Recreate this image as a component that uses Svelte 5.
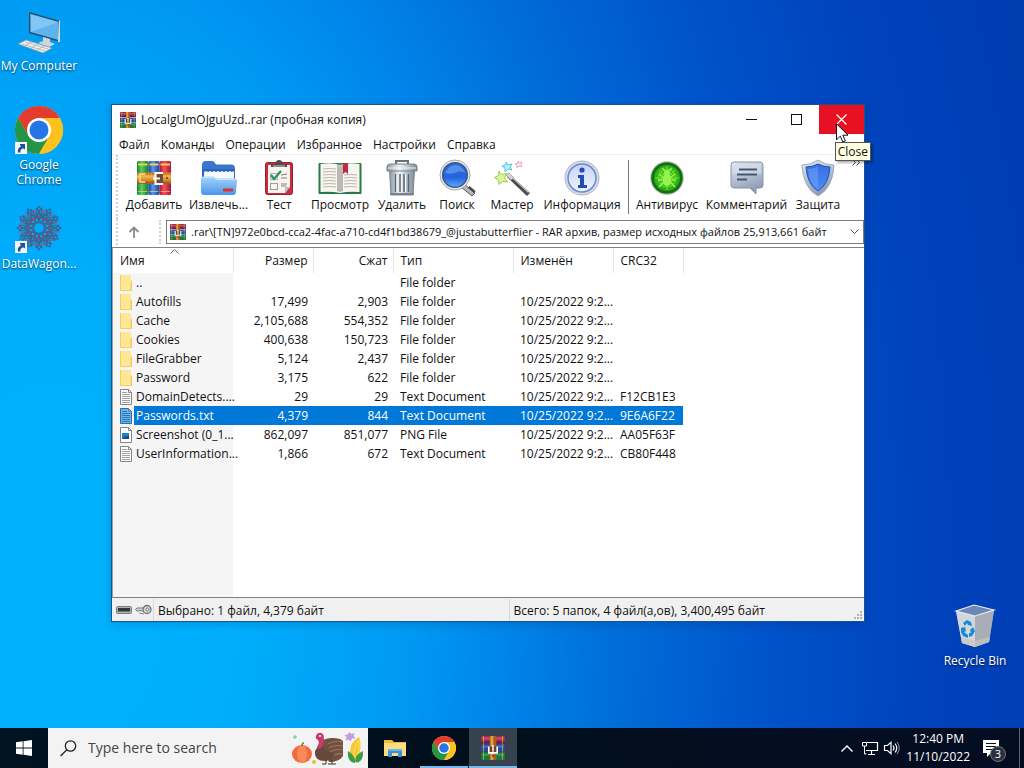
<script>
  const menu = ['Файл', 'Команды', 'Операции', 'Избранное', 'Настройки', 'Справка'];
  const tools = [
    ['add', 'Добавить'], ['extract', 'Извлечь...'], ['test', 'Тест'], ['view', 'Просмотр'],
    ['delete', 'Удалить'], ['find', 'Поиск'], ['wizard', 'Мастер'], ['info', 'Информация'],
    ['sep', ''], ['virus', 'Антивирус'], ['comment', 'Комментарий'], ['protect', 'Защита']
  ];
  const date = '10/25/2022 9:2...';
  const files = [
    { icon: 'folder', name: '..', size: '', packed: '', type: 'File folder', date: '', crc: '' },
    { icon: 'folder', name: 'Autofills', size: '17,499', packed: '2,903', type: 'File folder', date, crc: '' },
    { icon: 'folder', name: 'Cache', size: '2,105,688', packed: '554,352', type: 'File folder', date, crc: '' },
    { icon: 'folder', name: 'Cookies', size: '400,638', packed: '150,723', type: 'File folder', date, crc: '' },
    { icon: 'folder', name: 'FileGrabber', size: '5,124', packed: '2,437', type: 'File folder', date, crc: '' },
    { icon: 'folder', name: 'Password', size: '3,175', packed: '622', type: 'File folder', date, crc: '' },
    { icon: 'text', name: 'DomainDetects....', size: '29', packed: '29', type: 'Text Document', date, crc: 'F12CB1E3' },
    { icon: 'text', name: 'Passwords.txt', size: '4,379', packed: '844', type: 'Text Document', date, crc: '9E6A6F22' },
    { icon: 'image', name: 'Screenshot (0_1...', size: '862,097', packed: '851,077', type: 'PNG File', date, crc: 'AA05F63F' },
    { icon: 'text', name: 'UserInformation...', size: '1,866', packed: '672', type: 'Text Document', date, crc: 'CB80F448' }
  ];
  let selected = $state('Passwords.txt');
  const petals = [0, 30, 60, 90, 120, 150, 180, 210, 240, 270, 300, 330];
</script>

{#snippet rar(size)}
  <svg width={size} height={size} viewBox="0 0 16 16" aria-hidden="true">
    <rect x="0" y="0" width="16" height="5" rx="0.6" fill="#a02c50" />
    <rect x="0.6" y="1" width="14.8" height="1.3" fill="#c85070" />
    <rect x="0" y="3.6" width="16" height="1.4" fill="#651a44" />
    <rect x="0" y="5.4" width="16" height="5" rx="0.6" fill="#2448a4" />
    <rect x="0.6" y="6.4" width="14.8" height="1.3" fill="#4070c8" />
    <rect x="0" y="10.8" width="16" height="5.2" rx="0.6" fill="#167a3e" />
    <rect x="0.6" y="11.8" width="14.8" height="1.3" fill="#38a058" />
    <path d="M1.7 0v5M1.7 5.4v5M1.7 10.8v5M14.3 0v5M14.3 5.4v5M14.3 10.8v5" stroke="#d0a038" stroke-width="0.6" />
    <rect x="5.8" y="0" width="4.400" height="16" fill="#a85c22" />
    <rect x="6.4" y="0" width="1.8" height="16" fill="#e6a040" />
    <path d="M5.200 7v4.200h5.600V7" fill="#68402c" stroke="#fff" stroke-width="1.1" />
    <path d="M8 6v4.500" stroke="#fff" stroke-width="1" />
    <path d="M7.2 13.2h1.6" stroke="#5e2d10" stroke-width="0.8" />
  </svg>
{/snippet}

{#snippet chrome(size)}
  <svg width={size} height={size} viewBox="0 0 48 48" aria-hidden="true">
    <circle cx="24" cy="24" r="24" fill="#fcc31e" />
    <path d="M24 12H44.8A24 24 0 0 0 3.2 12L13.6 30Z" fill="#e33b2e" />
    <path d="M3.2 12A24 24 0 0 0 24 48L34.4 30L24 34L13.6 30Z" fill="#249447" />
    <path d="M44.8 12A24 24 0 0 1 24 48L34.4 30A12 12 0 0 0 24 12Z" fill="#fcc31e" />
    <circle cx="24" cy="24" r="12" fill="#fff" />
    <circle cx="24" cy="24" r="9.5" fill="#2675e8" />
  </svg>
{/snippet}

{#snippet shortcut()}
  <svg class="shortcut" width="12" height="12" viewBox="0 0 12 12" aria-hidden="true">
    <rect width="12" height="12" fill="#f3f5f8" />
    <path d="M3 10.5C2.4 7.5 3.4 5.6 6 4.6L4.6 2H10v5.4L8 6.2C6 7 5.2 8.3 5.4 10.5Z" fill="#1e5298" />
  </svg>
{/snippet}

{#snippet toolIcon(kind)}
  <svg width="36" height="36" viewBox="0 0 36 36" aria-hidden="true">
    {#if kind === 'add'}
      <rect x="1" y="1" width="11.500" height="34" rx="1.500" fill="url(#bookGreen)" />
      <rect x="12.500" y="1" width="11" height="34" rx="1.500" fill="url(#bookBlue)" />
      <rect x="23.500" y="1" width="11.500" height="34" rx="1.500" fill="url(#bookRed)" />
      <path d="M2 4.500h9.500M13.500 4.500h9M24.500 4.500h9.500" stroke="#f0d24c" stroke-width="2" />
      <path d="M2 31.500h9.500M13.500 31.500h9M24.500 31.500h9.500" stroke="#e8d070" stroke-width="1" opacity="0.700" />
      <path d="M1 12.500h34v11.500H1z" fill="url(#belt)" />
      <path d="M1 14h34M1 22.500h34" stroke="#7c4310" stroke-dasharray="2 1" stroke-width="0.600" />
      <path d="M9 14h-5v8h5" fill="none" stroke="#ffe596" stroke-width="1.300" />
      <path d="M19 14h8v9h-8z" fill="#6d4a3c" />
      <path d="M27 13h-7.500v11H27M17 18.500h7" fill="none" stroke="#fff8ec" stroke-width="2.200" />
      <circle cx="31" cy="18" r="1" fill="#63320d" />
    {:else if kind === 'extract'}
      <path d="M1 5q0-4 4-4h6q2 0 3 2l1 1.500h15q4 0 4 4V20H1z" fill="#3a76cc" />
      <path d="M1 9h33v10H1z" fill="#2c64ba" />
      <path d="M3 12l2-1 2 1 2-1 2 1 2-1 2 1 2-1 2 1 2-1 2 1 2-1 2 1 2-1 2 1 2-1v9H3z" fill="#f5f8fc" />
      <path d="M0 18q0-1.500 2-1.500h9q2 0 3 1t3 1h17q2 0 2 2l-1 11q0 3.500-3 3.500H3q-3 0-3-3.500z" fill="url(#folderBlue)" />
      <path d="M1 17.500h10q2 0 3 1t3 1h18" fill="none" stroke="#c4e6ff" />
      <rect x="22" y="28.500" width="10" height="3" rx="0.500" fill="#dc3325" />
    {:else if kind === 'test'}
      <rect x="4.500" y="2.500" width="27" height="32" rx="2" fill="#c72d3c" stroke="#971f31" />
      <path d="M7 5h22v22l-5 6H7z" fill="#f7f3ee" />
      <path d="M29 27l-5 6v-6z" fill="#bcbcbc" />
      <path d="M10 7V4h4q1-4 4-4t4 4h4v3z" fill="#54484c" />
      <path d="M12 6h12" stroke="#b8a9aa" stroke-width="1.300" />
      <rect x="9.500" y="13.500" width="7" height="6" fill="none" stroke="#b5b5b5" />
      <rect x="9.500" y="23.500" width="7" height="6" fill="none" stroke="#9b9b9b" />
      <path d="M10 15l3 4 7-8" fill="none" stroke="#23945a" stroke-width="2.200" />
      <path d="M20 15l6-1M20 18h6M20 24h6M20 26h5" stroke="#858080" />
    {:else if kind === 'view'}
      <rect x="-3.500" y="3" width="43" height="31" rx="1" fill="#277b49" />
      <path d="M-1.500 4q11-2 19.500 1 8.500-3 19.500-1v28q-11-1-19.500 1-8.500-2-19.500-1z" fill="#f8f5ef" />
      <path d="M15 4.500q3 0 3 2.500v25.500q-1-1.500-3-1.500zM18 7q0-2 3-2.500v26.500q-2 0-3 1.500z" fill="#bdb9b2" />
      <path d="M1 9q7-1 13 0M1 12q7-1 13 0M1 15q7-1 13 0M1 18q7-1 13 0M1 21q7-1 13 0M1 24q7-1 13 0M1 27q7-1 13 0M22 15q6-1 13 0M22 18q6-1 13 0M22 21q6-1 13 0M22 24q6-1 13 0M22 27q6-1 13 0" stroke="#bbb6af" fill="none" />
      <path d="M21 3h5v11l-2.500-2-2.500 2z" fill="#bd2b46" />
    {:else if kind === 'delete'}
      <path d="M12 4V1h12v3" fill="none" stroke="#697079" stroke-width="2" />
      <path d="M5.500 10h25l-1.500 25H7z" fill="url(#steel)" stroke="#7c8791" />
      <path d="M11.500 14v18M16 14v18M20 14v18M24.500 14v18" stroke="#5c6773" stroke-width="1.500" />
      <path d="M13 14v18M17.500 14v18M21.500 14v18" stroke="#f6f8fa" />
      <path d="M3 7q0-3 3-3h24q3 0 3 3v4H3z" fill="url(#steel)" stroke="#75818c" />
      <path d="M4 8h28" stroke="#edf2f5" />
      <path d="M6 34h24" stroke="#77828b" stroke-width="2" />
    {:else if kind === 'find'}
      <path d="M25 24l11 9-3 3-11-9z" fill="#b6b7b9" stroke="#55575c" />
      <path d="M29 28l6 5 1.500-2-6-5z" fill="#48474a" />
      <circle cx="16" cy="15" r="15" fill="#e7e9eb" stroke="#a2a9b1" />
      <circle cx="16" cy="15" r="12.300" fill="url(#lens)" stroke="#3d5680" stroke-width="1.500" />
      <path d="M6 13q4-8 11-8 7 1 9 8-4-3-8-1-6 3-12 1z" fill="#79b8f7" opacity="0.500" />
    {:else if kind === 'wizard'}
      <path d="M16 15l20 18-3 3-20-19z" fill="#4b4a4a" />
      <path d="M16 15.500l18.500 17" stroke="#bbb" stroke-width="1.200" />
      <path d="M15 13l5 5-3 2-5-5z" fill="#d5d5d5" stroke="#888" stroke-width="0.600" />
      <path d="M5 11l2.500 3.500 5-1-2 4.500 3 4-5-0.500-3.500 3-0.500-4.500-4-2.500 4-2z" fill="#dff59a" stroke="#94cf49" />
      <path d="M12 2l2 3 4-1-2 3 2 3-4-1-3 3v-4l-3-2 4-1z" fill="#b7f4fa" stroke="#4ac6db" />
      <path d="M24 1l1 2 3-1-1 3 1 2-3-1-2 2v-3l-2-1 3-1z" fill="#ffe5ee" stroke="#efabc3" />
    {:else if kind === 'info'}
      <circle cx="18" cy="18" r="17" fill="#d7dbe3" stroke="#aeb6c5" />
      <circle cx="18" cy="18" r="14" fill="url(#infoFill)" stroke="#6688d8" stroke-width="1.500" />
      <circle cx="18" cy="10" r="2.600" fill="#2549b5" />
      <path d="M14 15h6v10h3v3H14v-3h2v-7h-2z" fill="#2549b5" />
    {:else if kind === 'virus'}
      <circle cx="18" cy="18" r="17" fill="#c6d2c1" />
      <circle cx="18" cy="18" r="15.800" fill="#176d15" />
      <circle cx="18" cy="18" r="13" fill="url(#radar)" />
      <path d="M18 6v24M6 18h24M10 10l16 16M10 26l16-16" stroke="#7ff23d" stroke-width="0.800" />
      <circle cx="18" cy="18" r="9" fill="none" stroke="#63dc26" />
      <ellipse cx="18" cy="20" rx="4.500" ry="6" fill="#9af251" />
      <circle cx="18" cy="13" r="3" fill="#9af251" />
      <path d="M14 17l-4-3M13 20H9M14 23l-4 4M22 17l4-3M23 20h4M22 23l4 4M16 11l-3-3M20 11l3-3" stroke="#9af251" stroke-width="1.500" fill="none" />
    {:else if kind === 'comment'}
      <path d="M5 2h26q3 0 3 3v20q0 3-3 3h-4v6l-6-6H5q-3 0-3-3V5q0-3 3-3z" fill="url(#silver)" stroke="#8894a8" />
      <path d="M5 4h26q1 0 1 2v8H4V6q0-2 1-2z" fill="#d7e0ee" opacity="0.600" />
      <path d="M10 9.500h18M8 14.500h20M8 19.500h10" stroke="#475770" stroke-width="1.800" />
    {:else if kind === 'protect'}
      <path d="M18 0q7 5 16 5-1 23-16 31Q3 28 2 5q9 0 16-5z" fill="url(#silver)" stroke="#9caabd" />
      <path d="M18 4q6 3 12 3-1 17-12 24Q7 24 6 7q6 0 12-3z" fill="url(#shield)" stroke="#2252b4" />
      <path d="M18 6v23Q9 23 8 9q6 0 10-3z" fill="#78a9f9" opacity="0.450" />
    {/if}
  </svg>
{/snippet}

{#snippet fileIcon(kind)}
  <svg width="14" height="16" viewBox="0 0 14 16" aria-hidden="true">
    {#if kind === 'folder'}
      <path d="M1 0h11v5l1 1v10H1z" fill="#ffe795" />
      <path d="M1 0h1v16H1zM11.500 7l1.500-2v11h-1.500z" fill="#f3cd62" />
      <path d="M1 15.500h12" stroke="#f3cf68" />
    {:else}
      <path class="page" d="M1.500 0.500h8l3 3v12h-11z" fill="#fff" stroke="#858585" />
      <path d="M9.500 0.500v3h3" fill="none" stroke="#858585" />
      {#if kind === 'text'}
        <path class="lines" d="M3 3.500h5M3 5.500h8M3 7.500h8M3 9.500h8M3 11.500h8M3 13.500h8" stroke="#a0a0a0" />
      {:else}
        <rect x="3" y="6" width="7" height="6" fill="#1683cc" />
        <path d="M3 12l3-3 2 1 2-2v4z" fill="#174979" />
      {/if}
    {/if}
  </svg>
{/snippet}

<svg class="defs" width="0" height="0" aria-hidden="true">
  <defs>
    <linearGradient id="bookGreen"><stop stop-color="#15833a" /><stop offset="0.4" stop-color="#58d058" /><stop offset="1" stop-color="#147638" /></linearGradient>
    <linearGradient id="bookBlue"><stop stop-color="#193f9b" /><stop offset="0.4" stop-color="#559af0" /><stop offset="1" stop-color="#183f98" /></linearGradient>
    <linearGradient id="bookRed"><stop stop-color="#a51335" /><stop offset="0.4" stop-color="#fa505c" /><stop offset="1" stop-color="#a41538" /></linearGradient>
    <linearGradient id="belt" x2="0" y2="1"><stop stop-color="#d68825" /><stop offset="0.35" stop-color="#f4b64c" /><stop offset="1" stop-color="#a35a1c" /></linearGradient>
    <linearGradient id="folderBlue" x2="0" y2="1"><stop stop-color="#a5d4fc" /><stop offset="1" stop-color="#4b96e9" /></linearGradient>
    <linearGradient id="steel"><stop stop-color="#89959f" /><stop offset="0.4" stop-color="#f0f3f5" /><stop offset="0.7" stop-color="#b7c2cb" /><stop offset="1" stop-color="#7b8994" /></linearGradient>
    <linearGradient id="lens" x2="0" y2="1"><stop stop-color="#3268d4" /><stop offset="0.6" stop-color="#2464de" /><stop offset="1" stop-color="#5daaff" /></linearGradient>
    <linearGradient id="infoFill" x2="0" y2="1"><stop stop-color="#c6d4f6" /><stop offset="1" stop-color="#eef4ff" /></linearGradient>
    <radialGradient id="radar"><stop stop-color="#63dc25" /><stop offset="1" stop-color="#26a716" /></radialGradient>
    <linearGradient id="silver" x2="0.4" y2="1"><stop stop-color="#e5eaf2" /><stop offset="0.55" stop-color="#b4c0d1" /><stop offset="1" stop-color="#8f9db3" /></linearGradient>
    <linearGradient id="shield" x2="0" y2="1"><stop stop-color="#386ddd" /><stop offset="1" stop-color="#4b8dff" /></linearGradient>
  </defs>
</svg>

<div class="screen">
  <main class="desktop">
    <nav class="shortcuts" aria-label="Desktop">
      <button class="tile">
        <span class="pic">
          <svg width="48" height="48" viewBox="0 0 48 48" aria-hidden="true">
            <path d="M14 5l31 9v21L14 26z" fill="#284c67" />
            <path d="M15.500 7l28 8v18l-28-8z" fill="#5fb4ee" />
            <path d="M15.500 7l28 8-28 10z" fill="#a0dafa" opacity="0.500" />
            <path d="M44 13l1 1v21l-2 0v-2z" fill="#d8dde0" />
            <path d="M28 30l7 2v3l5 2-6 3-11-4 5-2z" fill="#cfd6d9" />
            <path d="M3 37l8-4 26 8-9 5z" fill="#eef0ee" stroke="#8a989f" stroke-width="0.800" />
            <path d="M7 37l23 7M10 35l23 7M10 39l7-4M16 41l7-4M22 43l7-4" stroke="#a8b2b6" stroke-width="0.800" />
          </svg>
        </span>
        <span class="caption">My Computer</span>
      </button>
      <button class="tile">
        <span class="pic">{@render chrome(48)}{@render shortcut()}</span>
        <span class="caption">Google Chrome</span>
      </button>
      <button class="tile">
        <span class="pic">
          <svg width="48" height="48" viewBox="0 0 48 48" fill="none" aria-hidden="true">
            {#each petals as angle}
              <g transform="rotate({angle} 24 23)">
                <path d="M24 15Q18 9 24 1Q30 9 24 15ZM24 18Q12 13 17 4M24 18Q36 13 31 4M20 14L24 8L28 14" stroke="#3f628c" stroke-width="1.200" />
                <circle cx="24" cy="13" r="1.500" fill="#b8446e" />
                <circle cx="19" cy="6" r="1.300" fill="#a9507c" />
              </g>
            {/each}
          </svg>
          {@render shortcut()}
        </span>
        <span class="caption">DataWagon...</span>
      </button>
    </nav>

    <button class="tile bin">
      <span class="pic">
        <svg width="48" height="48" viewBox="0 0 48 48" aria-hidden="true">
          <path d="M5 9l18-6 20 5-5 32-14 5-13-4z" fill="#b6bec8" opacity="0.950" />
          <path d="M5 9l19 5v31l-13-4z" fill="#d3d7dc" />
          <path d="M24 14l19-6-5 32-14 5z" fill="#a8adb8" />
          <path d="M5 9l18-6 20 5-19 6z" fill="#6d87b4" stroke="#e6edf3" stroke-width="1.200" />
          <path d="M10 35l14 4 15-4-1 5-14 5-13-4z" fill="#c9c5bc" opacity="0.700" />
          <path d="M12 21l4-3 4 2 1 4-4-1-1-2-2 3zM10 26l4-1 1 4-2 1 4 3v3l-5-2-2-4zM22 25l2 4-3 5-3 1v-4h2l-1-3z" fill="#168bd5" />
        </svg>
      </span>
      <span class="caption">Recycle Bin</span>
    </button>

    <section class="window" aria-label="WinRAR">
      <header class="titlebar">
        {@render rar(16)}
        <h1>LocalgUmOJguUzd..rar (пробная копия)</h1>
        <button class="control" aria-label="Minimize"><svg width="11" height="11"><path d="M0 5.500h11" stroke="#111" /></svg></button>
        <button class="control" aria-label="Maximize"><svg width="11" height="11"><rect x="0.500" y="0.500" width="10" height="10" fill="none" stroke="#111" /></svg></button>
        <button class="control close" aria-label="Close"><svg width="11" height="11"><path d="M0.500 0.500l10 10M10.500 0.500l-10 10" stroke="#fff" stroke-width="1.200" /></svg></button>
      </header>

      <nav class="menu" aria-label="Меню">
        {#each menu as item}<button>{item}</button>{/each}
      </nav>

      <div class="toolbar" role="toolbar">
        {#each tools as [kind, label]}
          {#if kind === 'sep'}
            <span class="sep"></span>
          {:else}
            <button>{@render toolIcon(kind)}<span>{label}</span></button>
          {/if}
        {/each}
      </div>

      <div class="address">
        <button class="up" aria-label="Вверх">
          <svg width="12" height="12" viewBox="0 0 12 12"><path d="M6 12V1.500M1.500 6L6 1.500 10.500 6" fill="none" stroke="#8a8a8a" stroke-width="1.800" /></svg>
        </button>
        <div class="combo">
          {@render rar(16)}
          <select aria-label="Путь">
            <option>.rar\[TN]972e0bcd-cca2-4fac-a710-cd4f1bd38679_@justabutterflier - RAR архив, размер исходных файлов 25,913,661 байт</option>
          </select>
          <svg class="drop" width="9" height="6"><path d="M0.500 0.500l4 4 4-4" fill="none" stroke="#555" /></svg>
        </div>
      </div>

      <div class="list">
        <table>
          <colgroup><col class="c-name" /><col class="c-num" /><col class="c-num" /><col class="c-type" /><col class="c-date" /><col class="c-crc" /></colgroup>
          <thead>
            <tr>
              <th class="sorted">Имя<svg width="9" height="5"><path d="M0.500 4.500l4-4 4 4" fill="none" stroke="#666" /></svg></th>
              <th class="num">Размер</th><th class="num">Сжат</th><th>Тип</th><th>Изменён</th><th>CRC32</th>
            </tr>
          </thead>
          <tbody>
            {#each files as f}
              <tr class:selected={f.name === selected} onclick={() => (selected = f.name)}>
                <td class="name"><div>{@render fileIcon(f.icon)}<span>{f.name}</span></div></td>
                <td class="num">{f.size}</td><td class="num">{f.packed}</td>
                <td>{f.type}</td><td>{f.date}</td><td>{f.crc}</td>
              </tr>
            {/each}
          </tbody>
        </table>
      </div>

      <footer class="status">
        <div class="locks">
          <svg width="16" height="10" viewBox="0 0 16 10" aria-hidden="true"><rect x="0.500" y="1.500" width="15" height="7" rx="1" fill="#b0b4b8" stroke="#777d82" /><rect x="2" y="3" width="12" height="3.500" fill="#30373d" /></svg>
          <svg width="17" height="12" viewBox="0 0 17 12" aria-hidden="true"><path d="M9 4H2L0.500 5.500 2 7h2l1-1 1 1h3" fill="#d7d7d7" stroke="#777" /><circle cx="12" cy="5.500" r="4" fill="#d4d7d9" stroke="#70767b" stroke-width="1.300" /><circle cx="12.500" cy="5.500" r="1.500" fill="#fff" stroke="#777" /><path d="M4 9l5 1" stroke="#888" /></svg>
        </div>
        <p>Выбрано: 1 файл, 4,379 байт</p>
        <p>Всего: 5 папок, 4 файл(а,ов), 3,400,495 байт</p>
        <svg class="grip" width="9" height="9" aria-hidden="true"><path d="M6 0h2v2h-2zM3 3h2v2h-2zM6 3h2v2h-2zM0 6h2v2h-2zM3 6h2v2h-2zM6 6h2v2h-2z" fill="#b4b4b4" /></svg>
      </footer>

      <svg class="more" width="9" height="7" aria-hidden="true"><path d="M0.500 0.500l3 3-3 3M4.500 0.500l3 3-3 3" fill="none" stroke="#444" /></svg>
      <span class="tooltip" role="tooltip">Close</span>
      <svg class="cursor" width="13" height="20" viewBox="0 0 13 20" aria-hidden="true"><path d="M0.500 0.800v16l3.800-3.600 2.600 5.800 2.500-1.100-2.600-5.700h5.200z" fill="#fff" stroke="#111" /></svg>
    </section>
  </main>

  <footer class="taskbar">
    <button class="start" aria-label="Start"><svg width="16" height="16" viewBox="0 0 16 16"><path d="M0 2.300l6.700-1v6.300H0zM7.500 1.200L16 0v7.600H7.500zM0 8.400h6.700v6.300L0 13.700zM7.500 8.400H16V16l-8.500-1.200z" fill="#fff" /></svg></button>
    <label class="search">
      <svg width="17" height="17" viewBox="0 0 17 17" aria-hidden="true"><circle cx="10.500" cy="6" r="5.200" fill="none" stroke="#222" stroke-width="1.300" /><path d="M6.800 9.800L0.600 16" stroke="#222" stroke-width="1.300" /></svg>
      <input type="text" placeholder="Type here to search" aria-label="Type here to search" />
      <svg width="72" height="36" viewBox="0 0 72 36" aria-hidden="true">
        <circle cx="3" cy="7" r="1.800" fill="#7fd1bb" />
        <path d="M57 2l2.500 2 3-1-1 3 2 2.500-3.500 0-1.500 3-2-2-3 1 1-3.500-2-2 3.500-0.500z" fill="#c39be3" />
        <ellipse cx="10" cy="24" rx="10" ry="9" fill="#f06a3c" /><ellipse cx="10" cy="24" rx="5" ry="9" fill="#f9895a" />
        <path d="M10 16q0-3 2-3" stroke="#64853a" stroke-width="1.600" fill="none" />
        <path d="M28 12q8-6 20-3l3 2v15q-4 6-14 6z" fill="#70503e" />
        <path d="M36 14q6-4 14-2M37 18q6-4 14-2M38 22q6-4 13-2M40 26q5-3 10-2" stroke="#94705a" fill="none" stroke-width="1.300" />
        <path d="M28 13q-3 5-5 8-1 10 10 10 9-1 9-8-8-2-10-5-2-2-1-5z" fill="#66493b" />
        <path d="M25 17q3-4 1-7-4-2-1-6 4-3 6.500 1 1 4 0 9-2 5-6 5z" fill="#c93a68" />
        <circle cx="28" cy="6" r="1" fill="#fff" />
        <path d="M34 30v4h-4M40 30v4h-4M40 34h4" stroke="#3d302b" fill="none" />
        <path d="M59 30q-4-16 8-23 4 9-2 24z" fill="#f8c632" />
        <path d="M62 29q-1-12 5-19M65 29q3-9 2-18" stroke="#fbe06b" fill="none" />
        <path d="M56 21q6 3 8 12-9 0-8-12zM71 21q-8 3-8 12 9-1 8-12z" fill="#3d9c43" />
        <circle cx="22" cy="32" r="2" fill="#f5b73a" />
      </svg>
    </label>
    <nav class="tasks" aria-label="Tasks">
      <button aria-label="File Explorer">
        <svg width="24" height="24" viewBox="0 0 24 24"><path d="M1 4h8l2 2h12v14H1z" fill="#f1b83a" /><path d="M1 7h22v13H1z" fill="#fddc80" /><path d="M5 13h14v8h-4v-4H9v4H5z" fill="#3795d5" /><path d="M5 13h14v2H5z" fill="#65b7e8" /></svg>
      </button>
      <button class="running" aria-label="Chrome">{@render chrome(24)}</button>
      <button class="running current" aria-label="WinRAR">{@render rar(24)}</button>
    </nav>
    <div class="tray">
      <button class="hidden-icons" aria-label="Show hidden icons"><svg width="12" height="7"><path d="M0.500 6.500L6 1l5.500 5.500" fill="none" stroke="#fff" stroke-width="1.400" /></svg></button>
      <button aria-label="Network"><svg width="16" height="14" viewBox="0 0 16 14"><path d="M5 1.500h10.500v8H4M9.500 9.500v3.500M6 13.500h7" fill="none" stroke="#fff" stroke-width="1.200" /><path d="M0.500 1.500h4v3.500h-4zM2.500 5v8h2" fill="none" stroke="#fff" /></svg></button>
      <button aria-label="Volume"><svg width="16" height="14" viewBox="0 0 16 14"><path d="M0.500 4.500h3L7 1.300v11.400L3.500 9.500h-3z" fill="none" stroke="#fff" stroke-width="1.200" /><path d="M9 4.500q2 2.500 0 5M11 2.500q3.500 4.500 0 9" fill="none" stroke="#fff" stroke-width="1.200" /><path d="M13 0.800q4.500 6.200 0 12.400" fill="none" stroke="#8d949d" /></svg></button>
      <time><span>12:40 PM</span><span>11/10/2022</span></time>
      <button class="notes" aria-label="Notifications"><svg width="16" height="17" viewBox="0 0 16 17"><path d="M0 0h16v13H8l-4 4v-4H0z" fill="#fff" /><path d="M3 3.500h10M3 6.500h10M3 9.500h10" stroke="#05101b" stroke-width="1.200" /></svg><span class="badge">3</span></button>
      <span class="peek"></span>
    </div>
  </footer>
</div>

<style>
  :global(body) { margin: 0; }
  .defs { position: absolute; }
  .screen {
    display: flex;
    flex-direction: column;
    min-height: 100vh;
    font: 12px/16px "Open Sans", "Noto Sans", sans-serif;
    color: #111;
    background: radial-gradient(ellipse 100% 220% at 5% 75%, #00b2fe 0%, #00aefc 18%, #009bf3 34%, #0086ea 44%, #0070da 54%, #0053ca 70%, #0043bc 85%, #003cb2 100%);
  }
  button {
    margin: 0;
    padding: 0;
    border: 0;
    background: none;
    font: inherit;
    color: inherit;
  }
  svg { display: block; flex: none; overflow: visible; }
  .desktop { position: relative; flex: 1; }

  .shortcuts { display: grid; grid-auto-rows: 99px; width: 78px; }
  .tile {
    display: flex;
    flex-direction: column;
    align-items: center;
    gap: 3px;
    width: 78px;
    padding-top: 7px;
    color: #fff;
    line-height: 15px;
    text-shadow: 0 1px 2px rgba(0, 0, 0, 0.7);
  }
  .pic { position: relative; }
  .shortcut { position: absolute; left: 0; bottom: 0; }
  .bin { position: absolute; right: 10px; bottom: 60px; }

  .window {
    position: absolute;
    top: 104px;
    right: 159px;
    bottom: 106px;
    left: 111px;
    display: flex;
    flex-direction: column;
    border: 1px solid #17568a;
    background: #fff;
    box-shadow: 0 2px 8px rgba(0, 20, 80, 0.2);
  }
  .titlebar { display: flex; align-items: center; height: 29px; padding-left: 8px; }
  h1 { flex: 1; margin: 0; padding-left: 5px; font: inherit; white-space: nowrap; }
  .control { display: grid; place-items: center; width: 45px; height: 29px; }
  .close { background: #e81123; }

  .menu { display: flex; gap: 11px; height: 18px; padding: 2px 0 0 7px; border-bottom: 1px solid #eee; }
  .toolbar {
    display: grid;
    grid-template-columns: 64px 65px 56px 66px 58px 52px 58px 82px 10px 68px 91px 52px;
    height: 59px;
    padding: 5px 0 0 4px;
    margin-left: 4px;
    border-left: 2px dotted #d0d0d0;
  }
  .toolbar button { display: flex; flex-direction: column; gap: 1px; align-items: center; min-width: 0; white-space: nowrap; }
  .sep { justify-self: center; width: 1px; height: 54px; background: #777; }
  .address { display: flex; align-items: center; height: 26px; margin-left: 4px; border-left: 2px dotted #d0d0d0; }
  .up { display: grid; place-items: center; width: 43px; height: 24px; padding-right: 10px; border-right: 2px dotted #d0d0d0; }
  .combo {
    display: flex;
    flex: 1;
    align-items: center;
    min-width: 0;
    height: 22px;
    margin-left: 5px;
    padding: 0 4px 0 3px;
    border: 1px solid #7a7a7a;
  }
  select {
    flex: 1;
    min-width: 0;
    padding: 0 0 0 5px;
    border: 0;
    outline: 0;
    appearance: none;
    background: none;
    font: inherit;
    font-size: 11px;
    color: inherit;
  }

  .list {
    flex: 1;
    margin-top: 2px;
    overflow: hidden;
    border-top: 1px solid #828282;
    border-bottom: 1px solid #828282;
    border-left: 1px solid #a0a0a0;
    background: linear-gradient(#f5f5f5, #f5f5f5) 0 0 / 120px 100% no-repeat #fff;
  }
  table { width: 570px; table-layout: fixed; border-collapse: collapse; }
  .c-name, .c-type { width: 120px; }
  .c-num { width: 80px; }
  .c-date { width: 100px; }
  .c-crc { width: 70px; }
  th, td { overflow: hidden; padding: 0 5px 0 7px; text-align: left; font-weight: 400; white-space: nowrap; }
  th { position: relative; height: 25px; background: #fff; border-right: 1px solid #e5e5e5; }
  th svg { position: absolute; top: 1px; left: 57px; }
  td { height: 19px; line-height: 19px; }
  .num { text-align: right; }
  .name { padding: 0 0 0 6px; overflow: visible; }
  .name div { display: flex; align-items: center; }
  .name span { flex: 1; margin-left: 1px; padding-left: 2px; }
  .selected td:not(.name), .selected .name span { background: #0078d7; color: #fff; }
  .selected .page { fill: #6fb2e8; stroke: #2c6da8; }
  .selected .lines { stroke: #2a78bd; }

  .status { position: relative; display: flex; align-items: center; height: 23px; background: #f0f0f0; }
  .status p { flex: 1; height: 22px; margin: 0; padding-left: 4px; line-height: 24px; border-left: 1px solid #d7d7d7; white-space: nowrap; }
  .locks { display: flex; gap: 3px; align-items: center; width: 37px; padding-left: 4px; }
  .grip { position: absolute; right: 1px; bottom: 1px; }

  .more { position: absolute; top: 54px; right: 3px; }
  .tooltip {
    position: absolute;
    top: 37px;
    right: -7px;
    padding: 0 2px;
    border: 1px solid #555;
    background: #ffffe1;
    line-height: 17px;
    box-shadow: 2px 2px 2px rgba(0, 0, 0, 0.3);
  }
  .cursor { position: absolute; top: 18px; right: 15px; }

  .taskbar { display: flex; height: 40px; background: linear-gradient(90deg, #00131f, #010e1c 50%, #030d22); }
  .start { display: grid; place-items: center; width: 48px; }
  .search { display: flex; align-items: center; gap: 11px; width: 304px; padding: 0 4px 0 12px; background: #f3f3f3; }
  input { flex: 1; min-width: 0; padding: 0; border: 0; outline: 0; background: none; font: 14px/20px "Open Sans", "Noto Sans", sans-serif; }
  input::placeholder { color: #444; opacity: 1; }
  .tasks { display: flex; gap: 1px; padding-left: 3px; }
  .tasks button { display: grid; place-items: center; width: 48px; }
  .running { box-shadow: inset 0 -2px #76b9ed; }
  .tasks .current { background: #36434f; }
  .tray { display: flex; align-items: center; gap: 6px; margin-left: auto; padding-right: 4px; color: #fff; }
  .hidden-icons { padding-right: 3px; }
  time { display: flex; flex-direction: column; align-items: center; line-height: 18px; }
  .notes { position: relative; margin: 0 14px 0 7px; }
  .badge {
    position: absolute;
    left: 7px;
    top: 6px;
    width: 14px;
    border: 1px solid #777;
    border-radius: 50%;
    background: #29323e;
    font-size: 11px;
    line-height: 14px;
    text-align: center;
  }
  .peek { align-self: stretch; width: 1px; background: #59616c; }
</style>
